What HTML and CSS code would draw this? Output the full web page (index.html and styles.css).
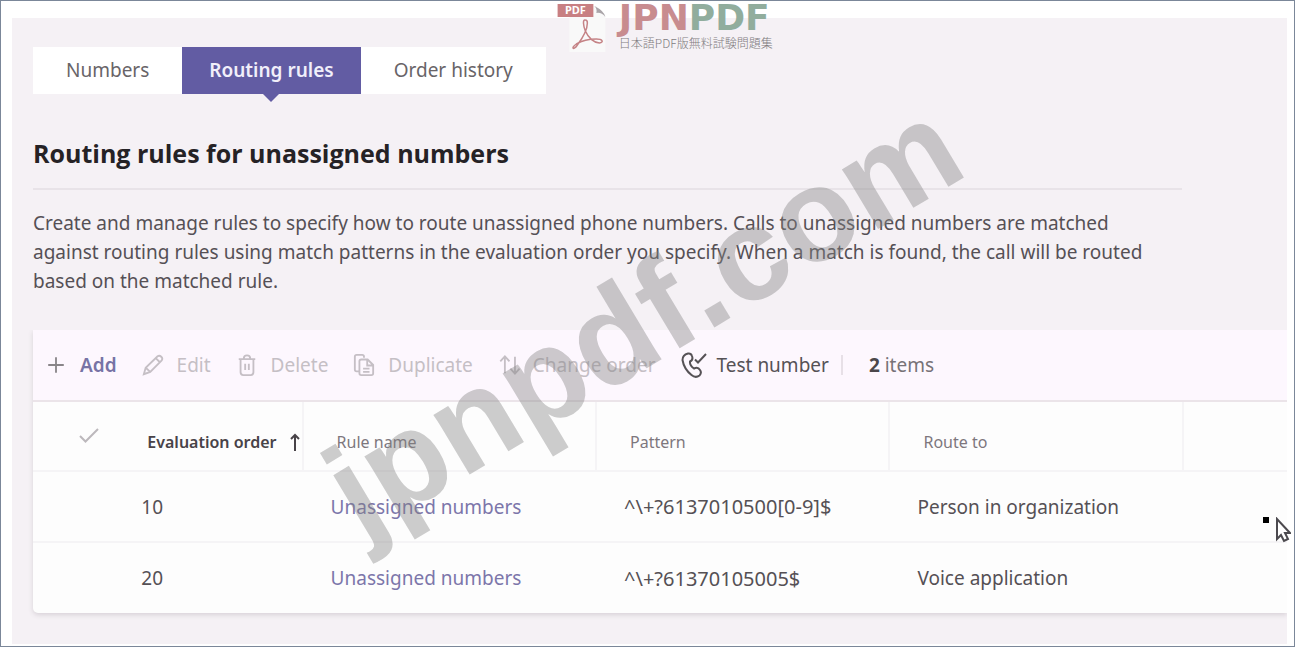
FILE: index.html
```
<!DOCTYPE html>
<html lang="en">
<head>
    <meta charset="UTF-8">
    <meta name="viewport" content="width=device-width, initial-scale=1.0">
    <title>Routing rules for unassigned numbers</title>
    <link rel="stylesheet" href="styles.css">
</head>
<body>
    <div class="panel">
        <nav class="tabs">
            <a href="#">Numbers</a>
            <a href="#" class="active" aria-current="page">Routing rules</a>
            <a href="#">Order history</a>
        </nav>

        <header class="intro">
            <h1>Routing rules for unassigned numbers</h1>
            <p>Create and manage rules to specify how to route unassigned phone numbers. Calls to unassigned numbers are matched against routing rules using match patterns in the evaluation order you specify. When a match is found, the call will be routed based on the matched rule.</p>
        </header>

        <div class="card">
            <div class="toolbar">
                <button class="add">
                    <svg viewBox="0 0 24 24"><path d="M12 3.500v17M3.500 12h17"/></svg>
                    Add
                </button>
                <button disabled>
                    <svg viewBox="0 0 24 24"><path d="M2 22l2-7L17 2.500q2-1.500 4 .5t.5 4L9 19.500zM15 4.500l4.500 4.500M4 15l5 4.500"/></svg>
                    Edit
                </button>
                <button disabled>
                    <svg viewBox="0 0 24 24"><path d="M3 5.500h18M5 5.500V20q0 3 3 3h8q3 0 3-3V5.500M8.500 5q0-3.500 3.500-3.500T15.500 5M10 10.500v7M14 10.500v7"/></svg>
                    Delete
                </button>
                <button disabled>
                    <svg viewBox="0 0 24 24"><path d="M7 19H4q-2 0-2-2V3q0-2 2-2h6q2 0 2 2v1M9 6h7l6 6v9q0 2-2 2H9q-2 0-2-2V8q0-2 2-2zM15.500 6v6.500H22M11 16h7M11 19.500h7"/></svg>
                    Duplicate
                </button>
                <button disabled>
                    <svg viewBox="0 0 24 24"><path d="M7.500 21V3M2.500 8l5-5.500 5 5.500M18.500 3v18M13.500 16l5 5.500 5-5.500"/></svg>
                    Change order
                </button>
                <button class="test">
                    <svg viewBox="0 0 26 26"><path d="M7 1.500q3-.5 4 2.500 1.500 4-2 5.500-.5 4 4 7 4-2 6 1.500 2 3-.5 5.500-4 3-8-.5Q3 17 1.500 8 1.500 3 7 1.500zM14 7.500l3 3 8-8.500"/></svg>
                    Test number
                </button>
                <div class="count"><b>2</b> items</div>
            </div>

            <table>
                <colgroup>
                    <col class="col-check">
                    <col class="col-order">
                    <col class="col-main">
                    <col class="col-main">
                    <col class="col-main">
                    <col>
                </colgroup>
                <thead>
                    <tr>
                        <th class="check" aria-label="Select"><svg viewBox="0 0 20 16"><path d="M1 9l5.500 5.500L19 2"/></svg></th>
                        <th class="sorted"><span>Evaluation order <svg viewBox="0 0 12 18"><path d="M6 18V2M2 6l4-4 4 4"/></svg></span></th>
                        <th>Rule name</th>
                        <th>Pattern</th>
                        <th>Route to</th>
                        <th></th>
                    </tr>
                </thead>
                <tbody>
                    <tr>
                        <td></td>
                        <td class="order">10</td>
                        <td><a href="#">Unassigned numbers</a></td>
                        <td class="pattern">^\+?6137010500[0-9]$</td>
                        <td>Person in organization</td>
                        <td></td>
                    </tr>
                    <tr>
                        <td></td>
                        <td class="order">20</td>
                        <td><a href="#">Unassigned numbers</a></td>
                        <td class="pattern">^\+?61370105005$</td>
                        <td>Voice application</td>
                        <td></td>
                    </tr>
                </tbody>
            </table>
        </div>
    </div>

    <!-- Logo, watermark and pointer lie over the page -->
    <div class="logo" lang="ja">
        <svg class="logo-icon" viewBox="0 0 50 50">
            <path fill="#f9f9f9" d="M12 4h27l9 9v37H12z"/>
            <path fill="#aaa5a9" d="M37 4q3 3 2 7 5-1 9 4-1-6-11-11z"/>
            <path fill="#c87f82" d="M0 2h36v13H0z"/>
            <path fill="none" stroke="#c58386" stroke-width="1.500" d="M28 18c-3-1-2 6 0 11 3 7 9 12 14 12 5-1 3-4-3-4-9 0-15 2-20 5-6 4-3 7 1 1 6-8 10-17 10-22 0-2-1-3-2-3z"/>
            <text x="18" y="12" text-anchor="middle">PDF</text>
        </svg>
        <div class="logo-text">
            <div class="logo-name">JPN<span>PDF</span></div>
            <div class="logo-tag">日本語PDF版無料試験問題集</div>
        </div>
    </div>
    <div class="watermark"><span>jpnpdf.com</span></div>
    <div class="pointer">
        <i></i>
        <svg viewBox="0 0 16 26"><path d="M2 2v20l4-4 3 6 4-2-3-6h5z"/></svg>
    </div>
</body>
</html>
```

FILE: styles.css
```
* {
    margin: 0;
    padding: 0;
    box-sizing: border-box;
}

body {
    position: relative;
    display: flex;
    min-height: 100vh;
    padding: 17px 7px 2px 11px;
    border: 1px solid #7b8799;
    background-color: #fff;
    color: #555055;
    font-family: "Noto Sans", "Open Sans", sans-serif;
    font-size: 19px;
    overflow: hidden;
}

a {
    text-decoration: none;
}

svg {
    fill: none;
    stroke: currentColor;
    stroke-width: 2;
}

.panel {
    flex: 1;
    min-width: 0;
    padding: 29px 0 31px 21px;
    background-color: #f5f1f5;
}

/* Tabs */
.tabs {
    display: flex;
    width: fit-content;
    background-color: #fff;
}

.tabs a {
    position: relative;
    padding: 0 33px;
    color: #686468;
    line-height: 47px;
}

.tabs .active {
    padding: 0 27px;
    background-color: #625ca3;
    color: #f1effa;
    font-weight: 600;
}

.tabs .active::after {
    content: "";
    position: absolute;
    top: 100%;
    left: 50%;
    border: 8px solid transparent;
    border-top-color: #625ca3;
    border-bottom: none;
    transform: translateX(-50%);
}

/* Heading and description */
.intro {
    margin-right: 105px;
}

.intro h1 {
    padding: 41px 0 17px;
    border-bottom: 2px solid #e8e3e8;
    color: #252225;
    font-family: "Open Sans", "Noto Sans", sans-serif;
    font-size: 25px;
    font-weight: 700;
    line-height: 36px;
}

.intro p {
    padding: 19px 20px 34px 0;
    line-height: 29px;
}

/* Card with rules */
.card {
    border-radius: 0 0 0 5px;
    background-color: #fdfdfd;
    box-shadow: 0 2px 5px #d8d2d8;
    clip-path: inset(0 0 -10px -10px);
}

.toolbar {
    display: flex;
    align-items: center;
    height: 72px;
    padding-left: 12px;
    border-bottom: 2px solid #ebe4e9;
    background-color: #fdf7fe;
    white-space: nowrap;
}

.toolbar button {
    display: flex;
    align-items: center;
    gap: 13px;
    margin-right: 25px;
    border: none;
    background: none;
    color: #565256;
    font: inherit;
}

.toolbar button:disabled {
    color: #c5bfc5;
}

.toolbar button svg {
    width: 22px;
    height: 22px;
}

.toolbar .add {
    color: #7773a5;
    font-weight: 600;
}

.toolbar .add svg {
    color: #898589;
}

.toolbar .test {
    gap: 10px;
    margin-right: 12px;
}

.toolbar .test svg {
    width: 26px;
    height: 26px;
}

.count {
    padding-left: 26px;
    border-left: 2px solid #e7e0e7;
    color: #777277;
    line-height: 20px;
}

.count b {
    color: #4b474b;
}

table {
    width: 100%;
    border-collapse: collapse;
    table-layout: fixed;
}

.col-check {
    width: 8%;
}

.col-order {
    width: 13.5%;
}

.col-main {
    width: 23.4%;
}

th {
    height: 69px;
    padding: 11px 0 0 33px;
    border-left: 2px solid #f5f4f6;
    color: #7d777d;
    font-size: 16px;
    font-weight: 400;
    text-align: left;
    white-space: nowrap;
}

th.check {
    padding: 2px 0 0 46px;
    border: none;
    color: #bcb8bc;
}

th.check svg {
    width: 20px;
    height: 16px;
}

th.sorted {
    padding-left: 14px;
    border: none;
    color: #484348;
    font-weight: 600;
}

th.sorted span {
    display: flex;
    align-items: center;
    gap: 12px;
}

th.sorted svg {
    width: 12px;
    height: 18px;
}

td {
    height: 71px;
    padding-left: 28px;
    border-top: 2px solid #f5f4f6;
    white-space: nowrap;
}

td.order {
    padding-left: 8px;
}

td.pattern {
    font-size: 20px;
}

td a {
    color: #7c76aa;
}

/* Overlays */
.logo {
    position: absolute;
    top: 1px;
    left: 50%;
    display: flex;
    gap: 12px;
    transform: translateX(-42%);
}

.logo-icon {
    width: 50px;
    height: 50px;
    stroke: none;
}

.logo-icon text {
    fill: #fff;
    font-size: 11px;
    font-weight: 700;
}

.logo-name {
    color: #c88c8f;
    font-family: "DejaVu Sans", sans-serif;
    font-size: 36px;
    font-weight: 700;
    line-height: 32px;
}

.logo-name span {
    color: #91ad9d;
}

.logo-tag {
    color: #807c80;
    font-family: "Noto Sans CJK JP", sans-serif;
    font-size: 12px;
    font-weight: 300;
    line-height: 18px;
    white-space: nowrap;
}

.watermark {
    position: absolute;
    inset: 0;
    display: flex;
    align-items: center;
    justify-content: center;
    padding: 0 10px 12px 0;
    color: rgba(130, 130, 130, 0.4);
    font-family: "Liberation Sans", Arial, sans-serif;
    font-size: 132px;
    font-weight: 700;
    pointer-events: none;
}

.watermark span {
    transform: rotate(-31deg);
}

.pointer {
    position: absolute;
    top: 516px;
    right: 3px;
    display: flex;
    gap: 6px;
}

.pointer i {
    width: 6px;
    height: 6px;
    background-color: #000;
}

.pointer svg {
    width: 16px;
    height: 26px;
    fill: #fff;
    stroke: #4c4a4f;
}
```
